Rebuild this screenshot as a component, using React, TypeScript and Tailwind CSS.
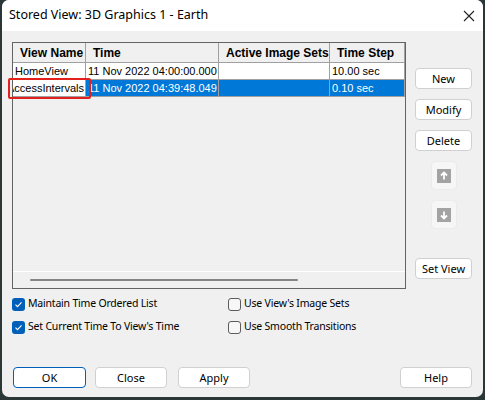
import React from "react";

const UI = "font-['Noto_Sans',sans-serif]";
const GRID = "font-['Liberation_Sans',Arial,sans-serif]";

type Row = { name: string; time: string; sets: string; step: string; selected?: boolean };

const ROWS: Row[] = [
  { name: "HomeView", time: "11 Nov 2022 04:00:00.000", sets: "", step: "10.00 sec" },
  { name: "AccessIntervals", time: "11 Nov 2022 04:39:48.049", sets: "", step: "0.10 sec", selected: true },
];

const COLS = ["w-[73px]", "w-[133px]", "w-[111px]", "w-[75px]"];

function Button({ label, className = "", primary = false }: { label: string; className?: string; primary?: boolean }) {
  return (
    <button
      className={`h-[21px] rounded-[4px] bg-white text-[11px] text-black leading-none flex items-center justify-center ${
        primary ? "border border-[#005fb8]" : "border border-[#d0d0d0]"
      } ${UI} ${className}`}
    >
      {label}
    </button>
  );
}

function ArrowButton({ down = false }: { down?: boolean }) {
  return (
    <div className="w-[26px] h-[29px] rounded-[4px] bg-[#f6f6f6] border border-[#ebebeb] flex items-center justify-center">
      <svg width="14" height="14" viewBox="0 0 14 14">
        <rect width="14" height="14" fill="#a3a3a3" />
        {down ? (
          <path d="M7 3.5v6.5M4 7.5l3 3 3-3" stroke="#fff" strokeWidth="1.8" fill="none" />
        ) : (
          <path d="M7 10.5V4M4 6.5l3-3 3 3" stroke="#fff" strokeWidth="1.8" fill="none" />
        )}
      </svg>
    </div>
  );
}

function Check({ label, checked = false }: { label: string; checked?: boolean }) {
  return (
    <div className="flex items-center h-[14px]">
      {checked ? (
        <div className="w-[13px] h-[13px] rounded-[3px] bg-[#005fb8] flex items-center justify-center">
          <svg width="9" height="9" viewBox="0 0 9 9">
            <path d="M1.5 4.6l2 2 4-4.2" stroke="#fff" strokeWidth="1.1" fill="none" />
          </svg>
        </div>
      ) : (
        <div className="w-[13px] h-[13px] rounded-[3px] bg-[#f7f7f7] border border-[#5c5c5c]" />
      )}
      <span className={`ml-[3px] text-[10.5px] tracking-[-0.2px] text-black ${UI}`}>{label}</span>
    </div>
  );
}

export default function App() {
  return (
    <div className="w-[485px] h-[400px] bg-[#2b3636] pl-[2px] pr-[2px] pb-[3px] overflow-hidden">
      <div className="h-full rounded-[7px] bg-[#f0f0f0] overflow-hidden flex flex-col">
        {/* Title bar */}
        <div className="h-[31px] bg-white flex items-center justify-between pl-[7px] pr-[8px] shrink-0">
          <span className={`text-[12.5px] text-black ${UI}`}>Stored View: 3D Graphics 1 - Earth</span>
          <svg width="12" height="12" viewBox="0 0 12 12">
            <path d="M1 1l10 10M11 1L1 11" stroke="#222" strokeWidth="1.1" />
          </svg>
        </div>

        {/* Body */}
        <div className="flex-1 pl-[10px] pt-[11px] relative">
          <div className="flex">
            {/* Table */}
            <div className="w-[394px] h-[247px] border border-[#646464] flex flex-col relative">
              <div className="flex h-[20px] bg-[#f0f0f0] border-b border-[#a0a0a0]">
                {["View Name", "Time", "Active Image Sets", "Time Step"].map((h, i) => (
                  <div
                    key={h}
                    className={`${COLS[i]} h-full border-r border-[#a0a0a0] pl-[7px] flex items-center text-[12px] font-bold text-black ${GRID}`}
                  >
                    {h}
                  </div>
                ))}
              </div>
              {ROWS.map((r) => (
                <div key={r.name} className={`flex h-[17px] border-b border-[#a0a0a0] ${r.selected ? "bg-[#0078d7] text-white" : "bg-white text-black"}`}>
                  {[r.name, r.time, r.sets, r.step].map((c, i) => (
                    <div
                      key={i}
                      className={`${COLS[i]} h-full border-r border-[#a0a0a0] flex items-center overflow-hidden whitespace-nowrap text-[11px] ${GRID} ${
                        r.selected && i === 0 ? "bg-white text-black justify-end pr-[1px]" : "pl-[2px]"
                      }`}
                    >
                      {c}
                    </div>
                  ))}
                </div>
              ))}
              <div className="flex-1" />
              {/* horizontal scrollbar */}
              <div className="h-[17px] border-t border-white flex items-center pl-[17px]">
                <div className="w-[268px] h-[2px] rounded-full bg-[#858585]" />
              </div>
            </div>

            {/* Side buttons */}
            <div className="ml-[9px] pt-[26px] flex flex-col items-center w-[57px]">
              <Button label="New" className="w-[57px]" />
              <Button label="Modify" className="w-[57px] mt-[10px]" />
              <Button label="Delete" className="w-[57px] mt-[10px]" />
              <div className="mt-[10px]">
                <ArrowButton />
              </div>
              <div className="mt-[10px]">
                <ArrowButton down />
              </div>
              <Button label="Set View" className="w-[57px] mt-[29px]" />
            </div>
          </div>

          {/* Annotation highlight */}
          <div className="absolute left-[6px] top-[47px] w-[83px] h-[21px] border-2 border-[#e3201b] rounded-[2px]" />

          {/* Checkboxes */}
          <div className="flex mt-[8px]">
            <div className="w-[216px] flex flex-col gap-[9px]">
              <Check label="Maintain Time Ordered List" checked />
              <Check label="Set Current Time To View's Time" checked />
            </div>
            <div className="flex flex-col gap-[9px]">
              <Check label="Use View's Image Sets" />
              <Check label="Use Smooth Transitions" />
            </div>
          </div>

          {/* Bottom buttons */}
          <div className="flex mt-[33px] pl-[1px]">
            <Button label="OK" primary className="w-[73px]" />
            <Button label="Close" className="w-[72px] ml-[9px]" />
            <Button label="Apply" className="w-[72px] ml-[11px]" />
            <Button label="Help" className="w-[72px] ml-[150px]" />
          </div>
        </div>
      </div>
    </div>
  );
}
